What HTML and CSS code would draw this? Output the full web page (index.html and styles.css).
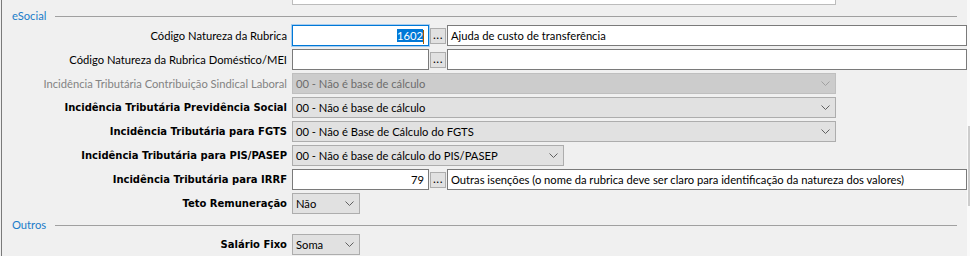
FILE: index.html
```html
<!DOCTYPE html>
<html lang="pt-BR">
<head>
  <meta charset="UTF-8" />
  <title>Rubrica - eSocial</title>
  <link rel="stylesheet" href="styles.css">
</head>
<body>
  <div class="panel">
    <div class="stub">
      <div class="row">
        <span class="lbl"></span>
        <div class="box wide light"></div>
      </div>
    </div>

    <div class="group"><span>eSocial</span><i></i></div>
    <div class="section">
      <div class="row">
        <span class="lbl">Código Natureza da Rubrica</span>
        <div class="box code focus"><span class="sel">1602</span><b class="caret"></b></div>
        <div class="dots">...</div>
        <div class="box desc">Ajuda de custo de transferência</div>
      </div>
      <div class="row">
        <span class="lbl">Código Natureza da Rubrica Doméstico/MEI</span>
        <div class="box code"></div>
        <div class="dots">...</div>
        <div class="box desc"></div>
      </div>
      <div class="row">
        <span class="lbl off">Incidência Tributária Contribuição Sindical Laboral</span>
        <div class="combo wide off">00 - Não é base de cálculo<svg width="9" height="5"><polyline points="0.5,0.5 4.5,4.5 8.5,0.5" /></svg></div>
      </div>
      <div class="row">
        <span class="lbl bold">Incidência Tributária Previdência Social</span>
        <div class="combo wide">00 - Não é base de cálculo<svg width="9" height="5"><polyline points="0.5,0.5 4.5,4.5 8.5,0.5" /></svg></div>
      </div>
      <div class="row">
        <span class="lbl bold">Incidência Tributária para FGTS</span>
        <div class="combo wide">00 - Não é Base de Cálculo do FGTS<svg width="9" height="5"><polyline points="0.5,0.5 4.5,4.5 8.5,0.5" /></svg></div>
      </div>
      <div class="row">
        <span class="lbl bold">Incidência Tributária para PIS/PASEP</span>
        <div class="combo mid">00 - Não é base de cálculo do PIS/PASEP<svg width="9" height="5"><polyline points="0.5,0.5 4.5,4.5 8.5,0.5" /></svg></div>
      </div>
      <div class="row">
        <span class="lbl bold">Incidência Tributária para IRRF</span>
        <div class="box code">79</div>
        <div class="dots">...</div>
        <div class="box desc">Outras isenções (o nome da rubrica deve ser claro para identificação da natureza dos valores)</div>
      </div>
      <div class="row">
        <span class="lbl bold">Teto Remuneração</span>
        <div class="combo small">Não<svg width="9" height="5"><polyline points="0.5,0.5 4.5,4.5 8.5,0.5" /></svg></div>
      </div>
    </div>

    <div class="group"><span>Outros</span><i></i></div>
    <div class="section">
      <div class="row">
        <span class="lbl bold">Salário Fixo</span>
        <div class="combo small">Soma<svg width="9" height="5"><polyline points="0.5,0.5 4.5,4.5 8.5,0.5" /></svg></div>
      </div>
    </div>
  </div>
  <div class="scroll"><div class="thumb"></div></div>
</body>
</html>
```

FILE: styles.css
```css
html, body {
  margin: 0;
  height: 256px;
  overflow: hidden;
  background: #f0f0f0;
}
body {
  display: flex;
  font-family: 'Lato', sans-serif;
  font-size: 11.2px;
  color: #000;
}
.panel {
  flex: 1;
  margin-left: 1px;
  border-left: 1px solid #7a7a7a;
}
.stub {
  height: 5px;
  overflow: hidden;
  display: flex;
  align-items: flex-end;
}
.group {
  height: 20px;
  display: flex;
  align-items: center;
  padding-left: 10px;
  padding-right: 10px;
}
.group span {
  color: #1a7cc9;
  margin-right: 9px;
}
.group i {
  flex: 1;
  height: 0;
  border-top: 1px solid #a0a0a0;
  margin-top: 2px;
}
.section {
  display: flex;
  flex-direction: column;
  gap: 3px;
}
.row {
  display: flex;
  align-items: center;
  height: 21px;
  flex-shrink: 0;
}
.lbl {
  width: 285px;
  text-align: right;
  margin-right: 5px;
  white-space: nowrap;
}
.lbl.bold {
  font-family: 'DejaVu Sans', sans-serif;
  font-weight: bold;
  font-size: 10px;
}
.lbl.off {
  color: #838383;
}
.box {
  box-sizing: border-box;
  height: 21px;
  background: #fff;
  border: 1px solid #7a7a7a;
  padding: 0 3px;
  line-height: 19px;
  white-space: nowrap;
  overflow: hidden;
}
.box.light {
  border-color: #bcbcbc;
}
.code {
  width: 137px;
  text-align: right;
  padding-right: 4px;
}
.desc {
  width: 520px;
}
.focus {
  border-color: #0078d7;
  box-shadow: 0 0 0 1px #a7cdef;
}
.sel {
  background: #0078d7;
  color: #fff;
}
.caret {
  display: inline-block;
  width: 1px;
  height: 14px;
  vertical-align: middle;
  background: #a05a00;
}
.dots {
  box-sizing: border-box;
  width: 16px;
  height: 16px;
  margin: 0 1px;
  background: #e1e1e1;
  border: 1px solid #adadad;
  font-size: 12px;
  line-height: 12px;
  text-align: center;
  letter-spacing: 0.5px;
}
.combo {
  box-sizing: border-box;
  height: 21px;
  background: #e1e1e1;
  border: 1px solid #adadad;
  padding: 0 5px 0 3px;
  display: flex;
  align-items: center;
  justify-content: space-between;
  white-space: nowrap;
}
.combo svg polyline {
  fill: none;
  stroke: #606060;
  stroke-width: 1;
}
.combo.off {
  background: #cccccc;
  border-color: #bfbfbf;
  color: #6d6d6d;
}
.combo.off svg polyline {
  stroke: #a0a0a0;
}
.wide {
  width: 544px;
}
.mid {
  width: 272px;
}
.small {
  width: 68px;
}
.scroll {
  width: 3px;
  background: #fafafa;
  position: relative;
}
.thumb {
  position: absolute;
  left: 1px;
  right: 0;
  top: 126px;
  height: 80px;
  background: #cdcdcd;
}
```
